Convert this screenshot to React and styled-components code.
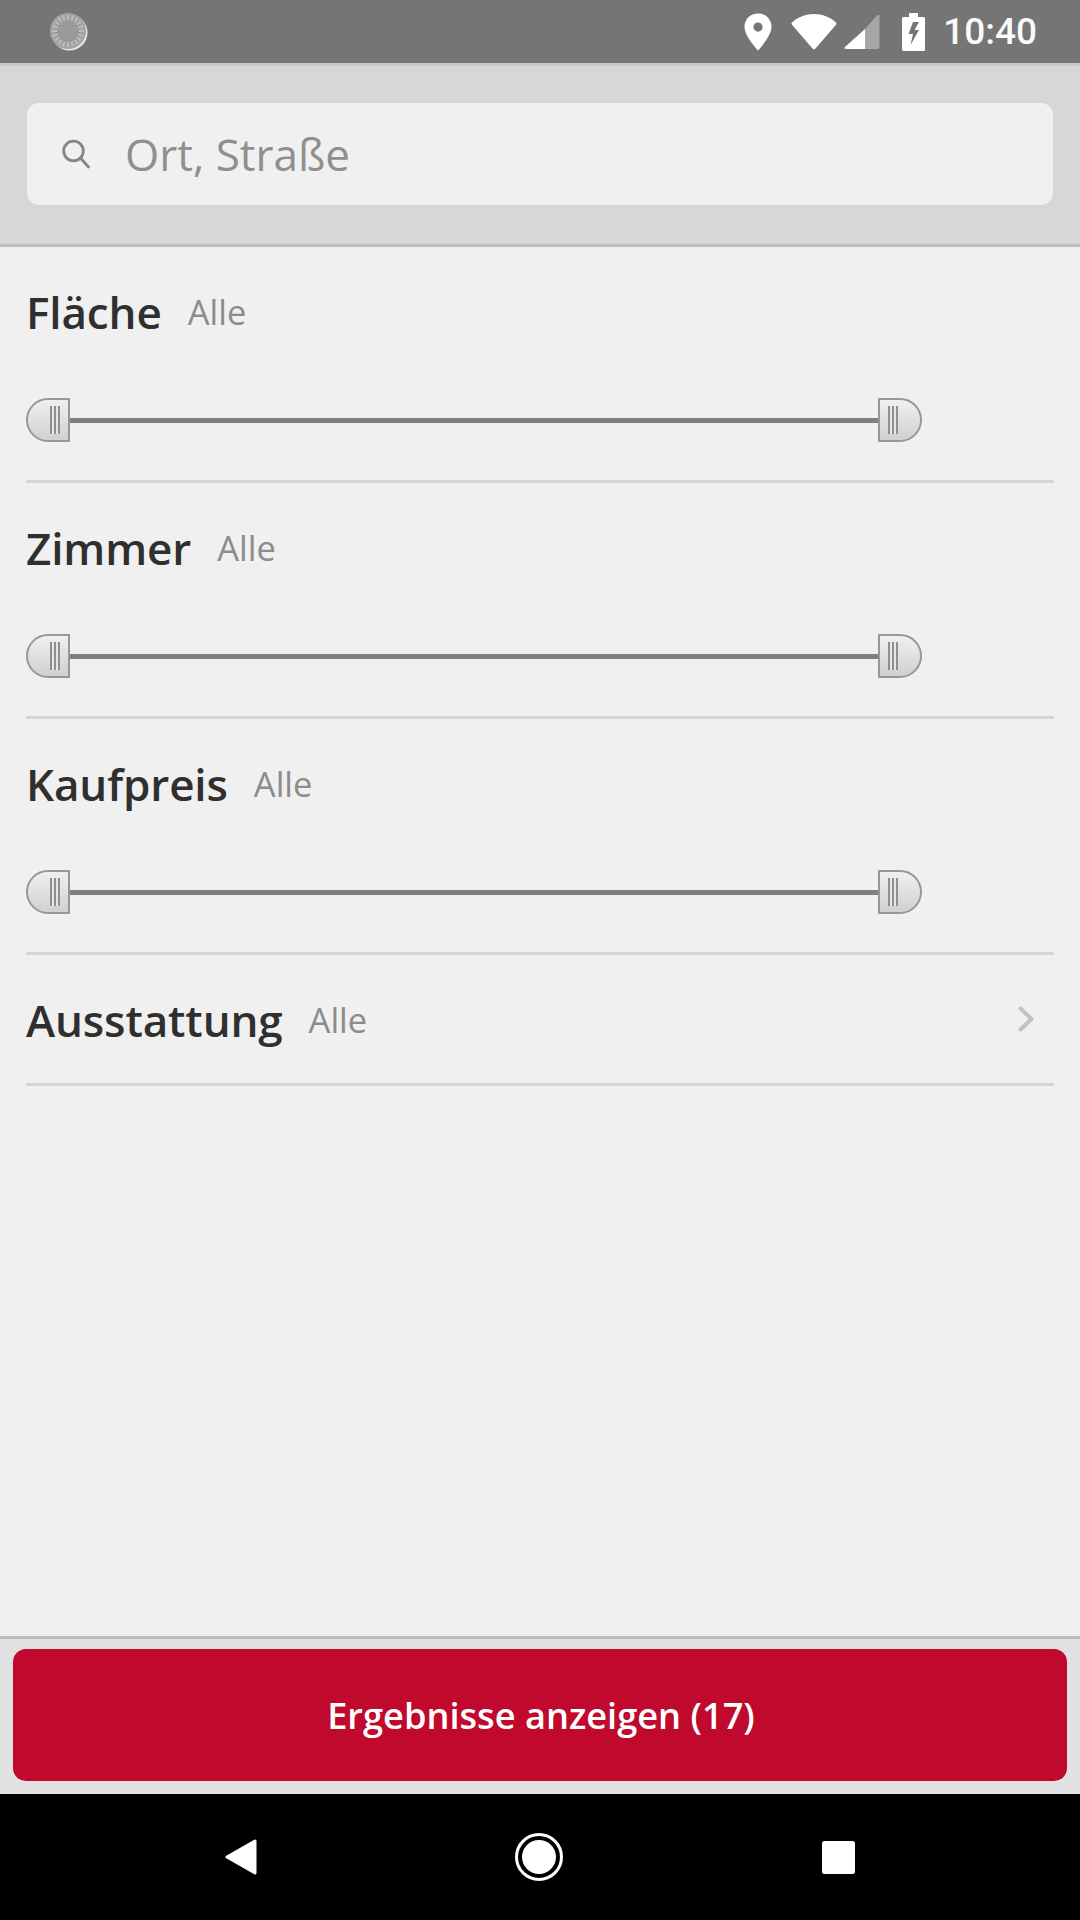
import React from 'react'
import styled, { createGlobalStyle } from 'styled-components'

const GlobalStyle = createGlobalStyle`
    html, body {
        margin: 0;
        padding: 0;
        background: #f0f0f0;
        font-family: "Open Sans", "Liberation Sans", sans-serif;
    }
`

const Page = styled.div`
    width: 1080px;
    height: 1920px;
    display: flex;
    flex-direction: column;
    overflow: hidden;
    background: #f0f0f0;
`

const StatusBar = styled.div`
    height: 63px;
    flex: none;
    background: #757575;
    display: flex;
    align-items: center;
    padding: 0 43px 0 50px;
    box-sizing: border-box;
`

const StatusIcons = styled.div`
    margin-left: auto;
    display: flex;
    align-items: center;
`

const StatusTime = styled.span`
    font-family: Roboto, sans-serif;
    font-weight: 500;
    font-size: 37px;
    line-height: 63px;
    color: #fff;
    margin-left: 18px;
    opacity: 0.97;
`

const SearchHeader = styled.div`
    height: 184px;
    flex: none;
    box-sizing: border-box;
    background: #d7d7d7;
    border-top: 3px solid #c9c9c9;
    border-bottom: 3px solid #bdbdbd;
    padding: 37px 27px 0;
`

const SearchBox = styled.div`
    height: 102px;
    background: #f0f0f0;
    border-radius: 12px;
    display: flex;
    align-items: center;
    padding-left: 35px;
`

const Placeholder = styled.span`
    font-size: 44px;
    color: #8f8f8f;
    margin-left: 35px;
`

const Filters = styled.div`
    flex: 1;
    padding: 0 26px;
`

const FilterRow = styled.div`
    height: ${p => (p.$slider ? 236 : 131)}px;
    box-sizing: border-box;
    border-bottom: 3px solid #d6d6d6;
    display: flex;
    flex-direction: column;
`

const RowHead = styled.div`
    height: 128px;
    flex: none;
    display: flex;
    align-items: center;
    gap: 26px;
`

const Title = styled.span`
    font-size: 44px;
    font-weight: 600;
    color: #2f2f2f;
    letter-spacing: -0.12px;
    margin-top: 1px;
`

const Value = styled.span`
    font-size: 34.5px;
    color: #8c8c8c;
    margin-top: 1px;
`

const Chevron = styled.svg`
    margin-left: auto;
    margin-right: 20px;
`

const Slider = styled.div`
    width: 896px;
    margin-top: 23px;
    display: flex;
    align-items: center;
`

const Track = styled.div`
    flex: 1;
    height: 5px;
    background: #7f7f7f;
`

const Thumb = styled.div`
    width: 44px;
    height: 44px;
    flex: none;
    box-sizing: border-box;
    border: 2px solid #979797;
    border-radius: ${p => (p.$side === 'left' ? '22px 0 0 22px' : '0 22px 22px 0')};
    background: linear-gradient(#f0f0f0, #d0d0d0);
    display: flex;
    justify-content: ${p => (p.$side === 'left' ? 'flex-end' : 'flex-start')};
    align-items: center;
    padding: 0 8px;
`

const Ridges = styled.div`
    width: 10px;
    height: 28px;
    background: repeating-linear-gradient(90deg, #8f8f8f 0 2px, #e6e6e6 2px 4px);
`

const Footer = styled.div`
    height: 158px;
    flex: none;
    box-sizing: border-box;
    background: #e2e2e2;
    border-top: 3px solid #bdbdbd;
    padding: 10px 13px 0;
`

const ResultButton = styled.button`
    width: 100%;
    height: 132px;
    border: 0;
    border-radius: 13px;
    background: #c0092c;
    color: #fff;
    font-family: inherit;
    font-size: 36.2px;
    font-weight: 600;
    padding: 0 0 0 2px;
`

const NavBar = styled.div`
    height: 126px;
    flex: none;
    background: #000;
    display: flex;
    align-items: center;
    padding: 0 0 0 225px;
`

const NavSlot = styled.div`
    width: ${p => p.$w}px;
    display: flex;
`

const SearchIcon = () => (
    <svg width="28" height="30" viewBox="0 0 28 30" fill="none" stroke="#858585" strokeWidth="2.8">
        <circle cx="11.5" cy="12" r="9.8" />
        <path d="M18.5 19 L26.5 28" strokeLinecap="round" />
    </svg>
)

const Spinner = () => {
    const ticks = Array.from({ length: 20 }, (_, i) => i * 18)
    return (
        <svg width="38" height="38" viewBox="0 0 38 38">
            <circle cx="19.5" cy="19.5" r="18" fill="#e8e8e8" />
            <circle cx="18" cy="18" r="18" fill="#a3a3a3" />
            <circle cx="18" cy="18" r="13" fill="#9a9a9a" />
            {ticks.map(a => (
                <rect key={a} x="17" y="2" width="2" height="5" fill="#bcbcbc" transform={`rotate(${a} 18 18)`} />
            ))}
        </svg>
    )
}

const PinIcon = () => (
    <svg width="28" height="38" viewBox="0 0 28 38">
        <path
            fillRule="evenodd"
            fill="#fff"
            d="M14 0.5C6.3 0.5 0.5 6.3 0.5 14C0.5 23 14 37.5 14 37.5S27.5 23 27.5 14C27.5 6.3 21.7 0.5 14 0.5ZM14 9.5a4.6 4.6 0 1 1 0 9.2a4.6 4.6 0 1 1 0 -9.2Z"
        />
    </svg>
)

const WifiIcon = () => (
    <svg width="46" height="37" viewBox="0 0 46 37" style={{ marginLeft: 19 }}>
        <path fill="#fff" d="M1 9.5C7 4 14.5 1 23 1s16 3 22 8.5a1.6 1.6 0 0 1 0 2.2L24.5 35.5a2 2 0 0 1-3 0L1 11.7a1.6 1.6 0 0 1 0-2.2Z" />
    </svg>
)

const SignalIcon = () => (
    <svg width="36" height="36" viewBox="0 0 36 36" style={{ marginLeft: 7 }}>
        <path fill="#a6a6a6" d="M35.5 1.5V33a2 2 0 0 1-2 2H21V15L33 1.5c1-1 2.5-1 2.5 0Z" />
        <path fill="#fff" d="M21 15V35H2c-1.5 0-2-1-1-2Z" />
    </svg>
)

const BatteryIcon = () => (
    <svg width="23" height="38" viewBox="0 0 23 38" style={{ marginLeft: 22 }}>
        <path
            fillRule="evenodd"
            fill="#fff"
            d="M7 0H16V4H21.5A1.5 1.5 0 0 1 23 5.5V36.5A1.5 1.5 0 0 1 21.5 38H1.5A1.5 1.5 0 0 1 0 36.5V5.5A1.5 1.5 0 0 1 1.5 4H7ZM11 9L6.5 21H11L8.5 32L17 17H12.5L17 9Z"
        />
    </svg>
)

const RangeSlider = () => (
    <Slider>
        <Thumb $side="left"><Ridges /></Thumb>
        <Track />
        <Thumb $side="right"><Ridges /></Thumb>
    </Slider>
)

const App = () => {
    return (
        <Page>
            <GlobalStyle />
            <StatusBar>
                <Spinner />
                <StatusIcons>
                    <PinIcon />
                    <WifiIcon />
                    <SignalIcon />
                    <BatteryIcon />
                    <StatusTime>10:40</StatusTime>
                </StatusIcons>
            </StatusBar>
            <SearchHeader>
                <SearchBox>
                    <SearchIcon />
                    <Placeholder>Ort, Straße</Placeholder>
                </SearchBox>
            </SearchHeader>
            <Filters>
                {['Fläche', 'Zimmer', 'Kaufpreis'].map(title => (
                    <FilterRow key={title} $slider>
                        <RowHead>
                            <Title>{title}</Title>
                            <Value>Alle</Value>
                        </RowHead>
                        <RangeSlider />
                    </FilterRow>
                ))}
                <FilterRow>
                    <RowHead>
                        <Title>Ausstattung</Title>
                        <Value>Alle</Value>
                        <Chevron width="16" height="26" viewBox="0 0 16 26" fill="none" stroke="#c2c2c2" strokeWidth="4" strokeLinecap="round" strokeLinejoin="round">
                            <path d="M2.5 2.5 L13.5 13 L2.5 23.5" />
                        </Chevron>
                    </RowHead>
                </FilterRow>
            </Filters>
            <Footer>
                <ResultButton>Ergebnisse anzeigen (17)</ResultButton>
            </Footer>
            <NavBar>
                <NavSlot $w={290}>
                    <svg width="32" height="36" viewBox="0 0 32 36">
                        <path fill="#fff" stroke="#fff" strokeWidth="3" strokeLinejoin="round" d="M2 18 L30 2 V34 Z" />
                    </svg>
                </NavSlot>
                <NavSlot $w={307}>
                    <svg width="48" height="48" viewBox="0 0 48 48">
                        <circle cx="24" cy="24" r="22.5" fill="none" stroke="#fff" strokeWidth="3" />
                        <circle cx="24" cy="24" r="17" fill="#fff" />
                    </svg>
                </NavSlot>
                <svg width="33" height="33" viewBox="0 0 33 33">
                    <rect width="33" height="33" rx="2.5" fill="#fff" />
                </svg>
            </NavBar>
        </Page>
    )
}

export default App
